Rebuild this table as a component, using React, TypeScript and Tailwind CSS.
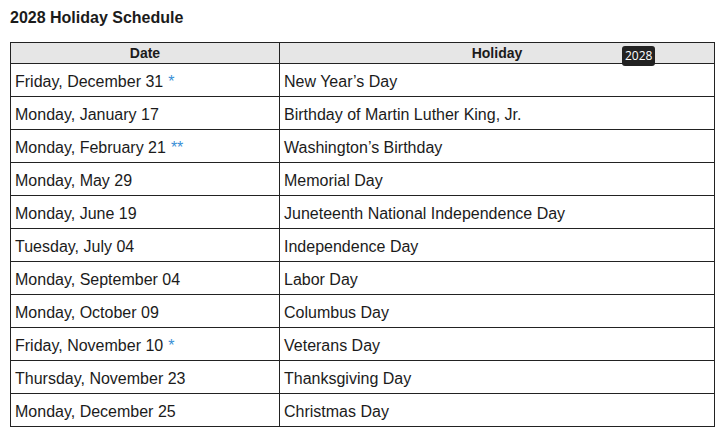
const holidays: { date: string; mark?: string; name: string }[] = [
  { date: "Friday, December 31", mark: "*", name: "New Year’s Day" },
  { date: "Monday, January 17", name: "Birthday of Martin Luther King, Jr." },
  { date: "Monday, February 21", mark: "**", name: "Washington’s Birthday" },
  { date: "Monday, May 29", name: "Memorial Day" },
  { date: "Monday, June 19", name: "Juneteenth National Independence Day" },
  { date: "Tuesday, July 04", name: "Independence Day" },
  { date: "Monday, September 04", name: "Labor Day" },
  { date: "Monday, October 09", name: "Columbus Day" },
  { date: "Friday, November 10", mark: "*", name: "Veterans Day" },
  { date: "Thursday, November 23", name: "Thanksgiving Day" },
  { date: "Monday, December 25", name: "Christmas Day" },
];

export default function App() {
  return (
    <div className="bg-white px-[10px] pt-[8px] font-['Liberation_Sans',Arial,sans-serif] text-[#1b1b1b]">
      <h1 className="text-[16px] font-bold leading-[19px]">2028 Holiday Schedule</h1>

      <div className="relative mt-[15px] w-[705px]">
        <table className="w-full border-collapse border border-[#222]">
          <thead>
            <tr className="bg-[#e6e6e6]">
              <th className="h-[21px] w-[269px] border border-[#222] p-0 text-[14px] font-bold leading-[16px]">
                Date
              </th>
              <th className="h-[21px] border border-[#222] p-0 text-[14px] font-bold leading-[16px]">
                Holiday
              </th>
            </tr>
          </thead>
          <tbody>
            {holidays.map((h) => (
              <tr key={h.name}>
                <td className="h-[33px] border border-[#222] pb-0 pl-[4px] pr-[5px] pt-[3px] text-[16px] leading-[18px]">
                  {h.date}
                  {h.mark && <span className="ml-[5px] text-[#3a8fd6]">{h.mark}</span>}
                </td>
                <td className="h-[33px] border border-[#222] pb-0 pl-[4px] pr-[5px] pt-[3px] text-[16px] leading-[18px]">
                  {h.name}
                </td>
              </tr>
            ))}
          </tbody>
        </table>

        {/* tooltip over header */}
        <div className="absolute left-[612px] top-[4px] rounded-[3px] bg-[#222] px-[3px] py-[2px] font-['Open_Sans',sans-serif] text-[12px] leading-[16px] text-white">
          2028
        </div>
      </div>
    </div>
  );
}
